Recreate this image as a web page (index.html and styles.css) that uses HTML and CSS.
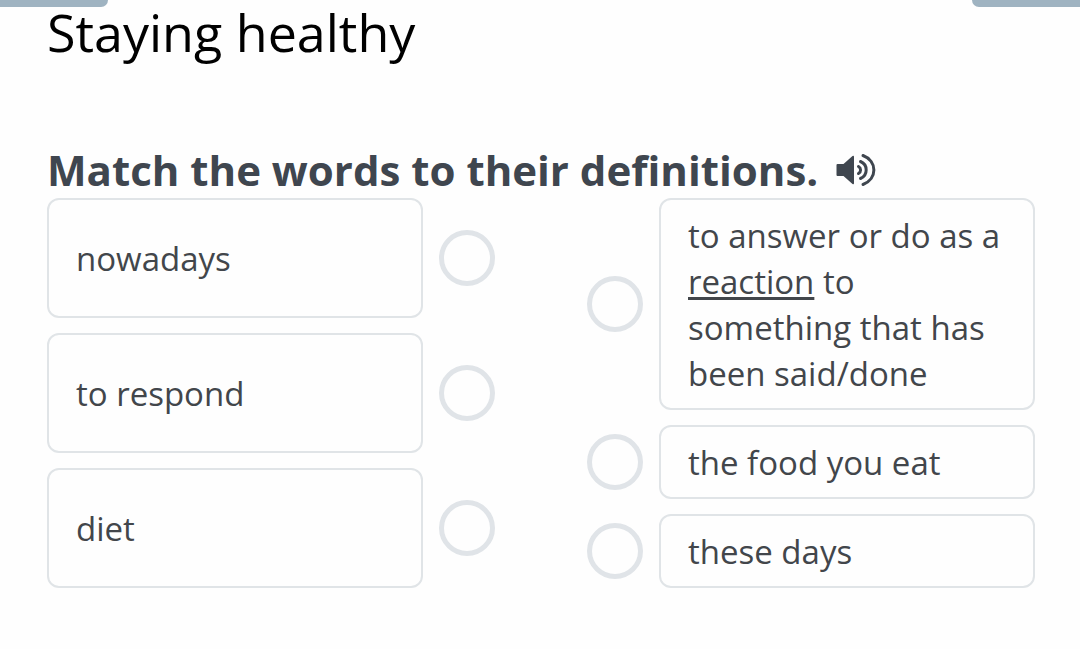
FILE: index.html
```html
<!DOCTYPE html>
<html lang="en">

<head>
    <meta charset="UTF-8" />
    <meta name="viewport" content="width=device-width, initial-scale=1.0" />
    <title>Staying healthy</title>
    <link rel="stylesheet" href="styles.css">
</head>

<body>
    <div class="top-bar">
        <div class="tab tab-left"></div>
        <div class="tab tab-right"></div>
    </div>

    <main class="container">
        <h1>Staying healthy</h1>

        <div class="task-title">
            <h2>Match the words to their definitions.</h2>
            <button class="audio-button" type="button" aria-label="Listen">
                <svg viewBox="0 0 40 34" width="40" height="34">
                    <path class="speaker" d="M1.500 11H7.500L16.500 3Q18 2 18 4V30Q18 32 16.500 31L7.500 23H1.500Q0.500 23 0.500 22V12Q0.500 11 1.500 11Z" />
                    <path class="wave" d="M22.500 13.500A4 4 0 0 1 22.500 20.500" />
                    <path class="wave" d="M24.500 8.500A9.200 9.200 0 0 1 24.500 25.500" />
                    <path class="wave" d="M27 2.500C41.500 8 41.500 26 27 31.500" />
                </svg>
            </button>
        </div>

        <form class="match">
            <div class="column words">
                <div class="row">
                    <label class="card" for="word-1">nowadays</label>
                    <input class="dot" type="radio" id="word-1" name="word">
                </div>
                <div class="row">
                    <label class="card" for="word-2">to respond</label>
                    <input class="dot" type="radio" id="word-2" name="word">
                </div>
                <div class="row">
                    <label class="card" for="word-3">diet</label>
                    <input class="dot" type="radio" id="word-3" name="word">
                </div>
            </div>

            <div class="column definitions">
                <div class="row">
                    <input class="dot" type="radio" id="def-1" name="definition">
                    <label class="card" for="def-1"><span>to answer or do as a <u>reaction</u> to <br>something that has been said/done</span></label>
                </div>
                <div class="row">
                    <input class="dot" type="radio" id="def-2" name="definition">
                    <label class="card" for="def-2">the food you eat</label>
                </div>
                <div class="row">
                    <input class="dot" type="radio" id="def-3" name="definition">
                    <label class="card" for="def-3">these days</label>
                </div>
            </div>
        </form>
    </main>
</body>

</html>
```
FILE: styles.css
```css
* {
    box-sizing: border-box;
}

body {
    margin: 0;
    background-color: #fefefe;
    color: #3f464f;
    font-family: "Open Sans", sans-serif;
}

.top-bar {
    display: flex;
    justify-content: space-between;
    height: 7px;
}

.tab {
    width: 10%;
    background-color: #9fb3c1;
}

.tab-left {
    border-bottom-right-radius: 12px;
}

.tab-right {
    border-bottom-left-radius: 12px;
}

.container {
    padding: 0 45px 60px 47px;
}

h1 {
    margin: 0 0 86px;
    color: #000;
    font-size: 52px;
    font-weight: 400;
    line-height: 50px;
}

.task-title {
    display: flex;
    align-items: center;
    gap: 18px;
    padding-bottom: 2px;
}

h2 {
    margin: 0;
    font-size: 42px;
    font-weight: 700;
    line-height: 53px;
}

.audio-button {
    display: flex;
    padding: 0;
    border: none;
    background: none;
    cursor: pointer;
}

.speaker {
    fill: #3f464f;
}

.wave {
    fill: none;
    stroke: #3f464f;
    stroke-width: 3;
    stroke-linecap: round;
}

.match {
    display: grid;
    grid-template-columns: 1fr 1fr;
    gap: 92px;
}

.column {
    display: flex;
    flex-direction: column;
    gap: 15px;
}

.row {
    display: flex;
    align-items: center;
    gap: 16px;
}

.words .row {
    flex: 1;
}

.card {
    display: flex;
    flex: 1;
    align-items: center;
    align-self: stretch;
    padding: 13px 27px 11px;
    border: 2px solid #e0e4e7;
    border-radius: 12px;
    color: #42464b;
    font-size: 33px;
    line-height: 46px;
    cursor: pointer;
}

.card u {
    text-underline-offset: 3px;
    text-decoration-thickness: 3px;
    text-decoration-skip-ink: none;
}

.dot {
    appearance: none;
    flex: none;
    width: 56px;
    height: 56px;
    margin: 0;
    border: 5px solid #e0e4e8;
    border-radius: 50%;
    cursor: pointer;
}

.dot:checked {
    background-color: #9fb3c1;
}
```
